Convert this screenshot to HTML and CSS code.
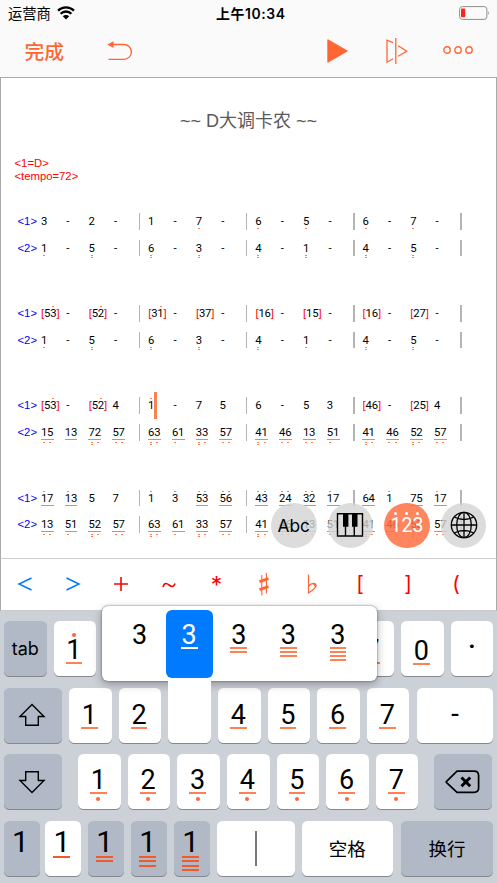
FILE: index.html
```html
<!DOCTYPE html>
<html lang="zh-CN">
<head>
  <meta charset="UTF-8">
  <meta name="viewport" content="width=device-width, initial-scale=1.0">
  <title>D大调卡农</title>
  <link rel="stylesheet" href="styles.css">
</head>
<body>
  <header>
    <div class="status">
      <div class="carrier">
        <span>运营商</span>
        <svg width="18" height="14" viewBox="0 0 18 14">
          <path d="M9 13.5 L5.8 10.2 A4.6 4.6 0 0 1 12.2 10.2 Z" fill="#000"/>
          <path d="M3.6 7.7 A7.7 7.7 0 0 1 14.4 7.7" fill="none" stroke="#000" stroke-width="2.3"/>
          <path d="M1 4.6 A11.5 11.5 0 0 1 17 4.6" fill="none" stroke="#000" stroke-width="2.3"/>
        </svg>
      </div>
      <span class="time">上午10:34</span>
      <svg class="battery" width="32" height="14" viewBox="0 0 32 14">
        <rect x="0.6" y="0.6" width="27.3" height="12.8" rx="2.8" fill="none" stroke="#8e8e8e"/>
        <rect x="2" y="2.6" width="4.2" height="8.6" rx="1" fill="#ff2419"/>
        <path d="M29.2 5 Q31 7 29.2 9 Z" fill="#8e8e8e"/>
      </svg>
    </div>
    <nav class="toolbar">
      <a class="done">完成</a>
      <svg class="undo" width="26" height="20" viewBox="0 0 26 20">
        <path d="M6 3.5 H17 A7.4 7.4 0 0 1 17 18.3 H1.5" fill="none" stroke="#ff6633" stroke-width="1.3"/>
        <path d="M0.3 3.5 L6.5 0.2 V6.9 Z" fill="#ff6633"/>
      </svg>
      <svg class="play" width="21" height="24" viewBox="0 0 21 24">
        <path d="M1 1 L20 12 L1 23 Z" fill="#ff6633" stroke="#ff6633" stroke-width="1.4" stroke-linejoin="round"/>
      </svg>
      <svg class="split" width="22" height="26" viewBox="0 0 22 26">
        <path d="M7 4.7 L1 2.2 V24.2 L7 20.7 M12.2 7.7 L20.7 13.2 L12.2 18.2 M9.8 0 V26" fill="none" stroke="#ff6633" stroke-width="1.3"/>
      </svg>
      <svg class="more" width="30" height="8" viewBox="0 0 30 8">
        <g fill="none" stroke="#ff6633" stroke-width="1.4">
          <circle cx="4" cy="4" r="3.2"/>
          <circle cx="15" cy="4" r="3.2"/>
          <circle cx="26" cy="4" r="3.2"/>
        </g>
      </svg>
    </nav>
  </header>

  <main class="editor">
    <h1>~~ D大调卡农 ~~</h1>
    <div class="meta">&lt;1=D&gt;<br>&lt;tempo=72&gt;</div>
    <div id="score"></div>

    <div class="modes">
      <button class="mode">Abc</button>
      <button class="mode">
        <svg width="28" height="26" viewBox="0 0 28 26">
          <path d="M1.5 1.8 H26.5 V24 H1.5 Z M9.5 2 V24 M18.3 2 V24" fill="none" stroke="#000" stroke-width="1.4"/>
          <path d="M7 2 H12.4 V14.8 H7 Z M16 2 H21.5 V14.8 H16 Z" fill="#000"/>
        </svg>
      </button>
      <button class="mode active">
        <span class="beads"><i></i><i></i><i></i></span>
        <span>123</span>
      </button>
      <button class="mode">
        <svg width="28" height="28" viewBox="0 0 28 28">
          <g fill="none" stroke="#000" stroke-width="1.3">
            <circle cx="14" cy="14" r="12.7"/>
            <ellipse cx="14" cy="14" rx="7.3" ry="12.7"/>
            <path d="M14 1.3 V26.7 M1.3 14 H26.7 M4.2 6 Q14 11 23.8 6 M4.2 22 Q14 17 23.8 22"/>
          </g>
        </svg>
      </button>
    </div>
  </main>

  <div class="symbols">
    <span><svg width="16" height="16" viewBox="0 0 16 16"><path d="M14.5 2 L2 8 L14.5 14" fill="none" stroke="#007aff" stroke-width="1.5"/></svg></span>
    <span><svg width="16" height="16" viewBox="0 0 16 16"><path d="M1.5 2 L14 8 L1.5 14" fill="none" stroke="#007aff" stroke-width="1.5"/></svg></span>
    <span><svg width="16" height="16" viewBox="0 0 16 16"><path d="M8 1 V15 M1 8 H15" fill="none" stroke="#f00" stroke-width="1.6"/></svg></span>
    <span><svg width="16" height="16" viewBox="0 0 16 16"><path d="M2 11 C3.5 6 6 7.5 8 9 S12.5 12 14 7.6" fill="none" stroke="#f00" stroke-width="1.6"/></svg></span>
    <span class="star">*</span>
    <span>
      <svg width="12" height="24" viewBox="0 0 12 24">
        <path d="M3.8 3 V23.5 M8.4 1 V21.5" stroke="#ff6633" stroke-width="1.1"/>
        <path d="M1.5 9.6 L10.5 6.6 M1.5 17.6 L10.5 14.6" stroke="#ff6633" stroke-width="2.8"/>
      </svg>
    </span>
    <span>
      <svg width="12" height="22" viewBox="0 0 12 22">
        <path d="M2.5 1.5 V20 C7 17 10 15 10 12.4 C10 9.3 5.3 10 2.6 13" fill="none" stroke="#ff6633" stroke-width="1.2"/>
        <path d="M7.3 10.8 Q10 11.5 9.2 14" fill="none" stroke="#ff6633" stroke-width="1.9"/>
      </svg>
    </span>
    <span>[</span>
    <span>]</span>
    <span>(</span>
  </div>

  <div class="keyboard">
    <div class="keys high" data-dots="high">
      <button class="key dark tab">tab</button>
      <button class="key" data-note="1"></button>
      <button class="key" data-note="2"></button>
      <button class="key" data-note="3"></button>
      <button class="key" data-note="4"></button>
      <button class="key" data-note="5"></button>
      <button class="key" data-note="6"></button>
      <button class="key" data-note="7"></button>
      <button class="key zero" data-note="0"></button>
      <button class="key dot">·</button>
    </div>

    <div class="keys">
      <button class="key dark shift">
        <svg width="28" height="24" viewBox="0 0 28 24"><path d="M14 1.5 L26 13.5 H20.3 V22.3 H7.7 V13.5 H2 Z" fill="none" stroke="#000" stroke-width="1.4"/></svg>
      </button>
      <button class="key" data-note="1"></button>
      <button class="key" data-note="2"></button>
      <button class="key pressed">
        <span class="popup" id="popup"></span>
      </button>
      <button class="key" data-note="4"></button>
      <button class="key" data-note="5"></button>
      <button class="key" data-note="6"></button>
      <button class="key" data-note="7"></button>
      <button class="key wide">-</button>
    </div>

    <div class="keys low" data-dots="low">
      <button class="key dark shift">
        <svg width="28" height="24" viewBox="0 0 28 24"><path d="M14 22.5 L26 10.5 H20.3 V1.7 H7.7 V10.5 H2 Z" fill="none" stroke="#000" stroke-width="1.4"/></svg>
      </button>
      <button class="key" data-note="1"></button>
      <button class="key" data-note="2"></button>
      <button class="key" data-note="3"></button>
      <button class="key" data-note="4"></button>
      <button class="key" data-note="5"></button>
      <button class="key" data-note="6"></button>
      <button class="key" data-note="7"></button>
      <button class="key dark delete">
        <svg width="36" height="24" viewBox="0 0 36 24">
          <path d="M12 1.2 H29 Q33.6 1.2 33.6 5.5 V18 Q33.6 22.3 29 22.3 H12 L1.6 12.6 Q1 12 1.6 11.4 Z" fill="none" stroke="#000" stroke-width="1.7" stroke-linejoin="round"/>
          <path d="M16.5 7.5 L25.2 16.2 M25.2 7.5 L16.5 16.2" stroke="#000" stroke-width="3"/>
        </svg>
      </button>
    </div>

    <div class="keys lengths">
      <button class="key dark" data-lines="0"></button>
      <button class="key" data-lines="1"></button>
      <button class="key dark" data-lines="2"></button>
      <button class="key dark" data-lines="3"></button>
      <button class="key dark" data-lines="4"></button>
      <button class="key bar-key"><i></i></button>
      <button class="key space">空格</button>
      <button class="key dark return">换行</button>
    </div>
  </div>

  <script src="script.js"></script>
</body>
</html>
```

FILE: styles.css
```css
* {
  margin: 0;
  padding: 0;
  box-sizing: border-box;
  border: none;
  outline: none;
}

body {
  width: 497px;
  height: 883px;
  overflow: hidden;
  display: flex;
  flex-direction: column;
  background-color: #fff;
  font-family: "Liberation Sans", "Noto Sans CJK SC", sans-serif;
}

svg {
  display: block;
  flex: none;
}

button {
  font-family: inherit;
  color: #000;
}

/* header */

header {
  height: 77px;
  background-color: #fafafa;
}

.status {
  display: flex;
  align-items: center;
  height: 25px;
  padding: 0 6px 0 8px;
  font-size: 14.3px;
}

.carrier {
  display: flex;
  align-items: center;
  gap: 7px;
  width: 208px;
}

.carrier svg {
  margin-left: -1px;
}

.time {
  flex: 1;
  font-family: Inter, "Noto Sans CJK SC", sans-serif;
  font-size: 13.9px;
  font-weight: 600;
  letter-spacing: .6px;
}

.toolbar {
  display: flex;
  align-items: center;
  height: 51px;
  padding-left: 24.5px;
}

.done {
  width: 82px;
  color: #ff6633;
  font-size: 19.8px;
  font-weight: 500;
  line-height: 28px;
  font-family: "Noto Sans CJK SC", sans-serif;
}

.play {
  margin-left: 194px;
}

.split {
  margin-left: 38px;
}

.more {
  margin-left: 35px;
  margin-bottom: 2px;
}

/* score */

.editor {
  position: relative;
  height: 481px;
  border: 1px solid #aaa;
  border-bottom: none;
}

h1 {
  margin-top: 30px;
  height: 26px;
  line-height: 26px;
  text-align: center;
  font-size: 18px;
  font-weight: normal;
  color: #5a5a5a;
}

.meta {
  margin: 22.5px 0 0 13.5px;
  height: 26px;
  font-size: 11.3px;
  line-height: 13px;
  color: #f00;
}

#score {
  display: flex;
  flex-direction: column;
  gap: 38.8px;
  padding: 26.5px 0 0 16.5px;
}

.system {
  height: 53.4px;
}

.staff {
  display: flex;
  height: 26.7px;
  font-size: 11.3px;
}

.label {
  width: 23.5px;
  line-height: 25px;
  color: #00f;
}

.measure {
  display: flex;
  width: 107.2px;
}

.measure::after {
  content: "";
  width: 1.3px;
  height: 16.5px;
  margin: 4px 0 0 2.5px;
  background-color: #b4b4b4;
}

.cell {
  display: flex;
  width: 23.85px;
  flex: none;
  line-height: 11px;
  font-family: Roboto, sans-serif;
}

.cell.caret {
  position: relative;
}

.cell.caret::after {
  content: "";
  position: absolute;
  left: 6px;
  top: -1px;
  width: 2.7px;
  height: 27px;
  background-color: #ff7f50;
}

.bracket {
  padding-top: 7px;
  color: #f00;
  font-family: "Liberation Sans", sans-serif;
}

.note {
  display: flex;
  flex-direction: column;
  align-items: center;
  width: 6.15px;
  padding-top: 5px;
}

.note i {
  width: 2px;
  height: 1px;
  margin-bottom: 1px;
  background-color: #ff7f50;
}

.note i.none {
  background: none;
}

.note b {
  font-weight: normal;
  height: 12px;
}

.note.line b {
  height: 13px;
  width: 6.8px;
  text-align: center;
  margin-bottom: 2px;
  border-bottom: 1.2px solid #ff7f50;
}

/* input mode buttons */

.modes {
  position: absolute;
  left: 270px;
  top: 424.5px;
  display: flex;
  gap: 11.1px;
}

.mode {
  display: flex;
  flex-direction: column;
  align-items: center;
  justify-content: center;
  width: 45.5px;
  height: 45.5px;
  border-radius: 50%;
  background-color: rgba(211, 211, 211, .8);
  font-family: Inter, sans-serif;
  font-size: 17.3px;
}

.mode.active {
  background-color: rgba(255, 112, 67, .85);
  color: #fff;
  font-family: Roboto, sans-serif;
  font-size: 19.5px;
  line-height: 19px;
  padding-bottom: 3px;
}

.beads {
  display: flex;
  gap: 8px;
  margin-bottom: 1px;
}

.beads i {
  width: 3px;
  height: 3px;
  border-radius: 50%;
  background-color: #fff;
}

/* symbol bar */

.symbols {
  display: flex;
  height: 53px;
  padding-bottom: 2px;
  border: 1px solid #aaa;
  border-top-color: #ccc;
  border-bottom-color: #ccc;
  flex: none;
}

.symbols span {
  display: flex;
  align-items: center;
  justify-content: center;
  width: 47.9px;
  flex: none;
  color: #f00;
  font-family: Inter, sans-serif;
  font-size: 21px;
}

.symbols .star {
  font-size: 23px;
  padding-top: 2px;
}

/* keyboard */

.keyboard {
  flex: 1;
  display: flex;
  flex-direction: column;
  gap: 11.7px;
  padding: 10px 4px 0;
  background-color: #ccd0d7;
}

.keys {
  display: flex;
  gap: 7.15px;
}

.key {
  display: flex;
  align-items: center;
  justify-content: center;
  width: 42.5px;
  height: 55px;
  flex: none;
  border-radius: 5.5px;
  background-color: #fff;
  box-shadow: 0 1px 0 #85888d;
  font-family: Roboto, sans-serif;
  font-size: 27px;
}

.key.dark {
  background-color: #b1b8c6;
}

.key.tab {
  font-family: Inter, sans-serif;
  font-size: 18px;
}

.key.dot {
  font-size: 34px;
  padding-bottom: 5px;
}

.shift {
  width: 58px;
  padding-right: 2px;
}

.wide {
  width: 76.5px;
  font-family: "Liberation Sans", sans-serif;
  padding-bottom: 3px;
}

.low .shift {
  margin-right: 9px;
}

.delete {
  width: 58.3px;
  margin-left: 8.5px;
}

.digit {
  display: flex;
  flex-direction: column;
  align-items: center;
  margin-right: 2px;
  padding-top: 3px;
  line-height: 22px;
}

.digit i {
  width: 16.7px;
  height: 2px;
  margin-top: 1px;
  background-color: #ff8052;
}

.digit i.bead {
  width: 4px;
  height: 4px;
  border-radius: 50%;
  margin-top: 3px;
  background-color: #ff6633;
}

.digit i.bead:first-child {
  margin: -3px 0 2px;
}

.low .digit {
  padding-top: 7px;
}

.zero .digit {
  padding-top: 7px;
}

.pressed {
  position: relative;
  z-index: 1;
}

.popup {
  position: absolute;
  left: -66.5px;
  top: -82px;
  display: flex;
  width: 275px;
  height: 75.5px;
  padding: 4px 14px;
  border-radius: 6px;
  background-color: #fff;
  box-shadow: 0 0 2px rgba(0, 0, 0, .6), 0 3px 10px rgba(0, 0, 0, .3);
}

/* joins the popup with the pressed key */
.popup::after {
  content: "";
  position: absolute;
  left: 66.5px;
  top: 74px;
  width: 42.5px;
  height: 20px;
  background-color: #fff;
}

.popup .digit {
  width: 47.3px;
  height: 68px;
  margin-right: 2.3px;
  padding-top: 14px;
  border-radius: 6px;
  flex: none;
}

.popup .digit i + i {
  margin-top: 2px;
}

.popup .selected {
  background-color: #007aff;
  color: #fff;
}

.popup .selected i {
  background-color: #fff;
}

.lengths .key {
  width: 35.8px;
  align-items: flex-start;
  font-size: 30px;
}

.lengths .key:nth-child(2) {
  margin-left: -1.5px;
}

.lengths .digit {
  padding-top: 10px;
  margin-right: 3px;
}

.lengths .digit i {
  margin-top: 2.4px;
  background-color: #f15a29;
}

.lengths .digit i:first-of-type {
  margin-top: 3px;
}

.lengths .bar-key {
  width: 77.5px;
  align-items: center;
}

.bar-key i {
  width: 1.2px;
  height: 35px;
  background-color: #777;
}

.lengths .space,
.lengths .return {
  width: 91px;
  align-items: center;
  padding-bottom: 2px;
  font-family: "Noto Sans CJK SC", sans-serif;
  font-size: 18.5px;
}

.lengths .return {
  width: 92px;
  margin-left: 1px;
}
```

FILE: script.js
```js
// ' dot above, , dot below, _ underlined group, ! caret
const systems = [
  [
    "3 - 2 - | 1 - 7, - | 6, - 5, - | 6, - 7, -",
    "1, - 5,, - | 6,, - 3,, - | 4,, - 1,, - | 4,, - 5,, -"
  ],
  [
    "[53'] - [52'] - | [31'] - [37] - | [16] - [15] - | [16] - [27] -",
    "1, - 5,, - | 6,, - 3,, - | 4,, - 1, - | 4,, - 5,, -"
  ],
  [
    "[53'] - [52'] 4 | !1' - 7 5 | 6 - 5 3 | [46] - [25] 4",
    "_1,5, _13 _7,,2, _5,7, | _6,,3, _6,1 _3,,3, _5,7, | _4,,1, _4,6, _1,3, _5,1 | _4,,1, _4,6, _5,,2, _5,7,"
  ],
  [
    "_1'7 _1'3 5 7 | 1' 3' _5'3' _5'6' | _4'3' _2'4' _3'2' _1'7 | _64 1' _75 _1'7",
    "_1,3, _5,1 _5,,2, _5,7, | _6,,3, _6,1 _3,,3, _5,7, | _4,,1, _4,6, _1,3, _5,1 | _4,,1, _4,6, _5,,2, _5,7,"
  ]
]

function renderCell(text) {
  const line = text.includes('_') ? ' line' : ''
  const caret = text.includes('!') ? ' caret' : ''
  const parts = text.match(/[\[\]]|[\d-]['|,]*/g)

  const html = parts.map(part => {
    if (part === '[' || part === ']') return `<span class="bracket">${part}</span>`

    const high = part.includes("'") ? 'high' : 'high none'
    const low = '<i></i>'.repeat(part.split(',').length - 1)

    return `<span class="note${line}"><i class="${high}"></i><b>${part[0]}</b>${low}</span>`
  }).join('')

  return `<div class="cell${caret}">${html}</div>`
}

function renderStaff(text, index) {
  const measures = text.split(' | ').map(measure =>
    `<div class="measure">${measure.split(' ').map(renderCell).join('')}</div>`
  ).join('')

  return `<div class="staff"><span class="label">&lt;${index + 1}&gt;</span>${measures}</div>`
}

function renderDigit(digit, lines, dots, className = '') {
  const bead = '<i class="bead"></i>'

  return `<span class="digit ${className}">${dots === 'high' ? bead : ''}${digit}${'<i></i>'.repeat(lines)}${dots === 'low' ? bead : ''}</span>`
}

document.getElementById('score').innerHTML = systems.map(staffs =>
  `<div class="system">${staffs.map(renderStaff).join('')}</div>`
).join('')

document.querySelectorAll('[data-note]').forEach(key => {
  const { note } = key.dataset
  const dots = note === '0' ? '' : key.parentElement.dataset.dots

  key.innerHTML = renderDigit(note, 1, dots)
})

document.querySelectorAll('[data-lines]').forEach(key => {
  key.innerHTML = renderDigit(1, Number(key.dataset.lines))
})

document.getElementById('popup').innerHTML = [0, 1, 2, 3, 4].map(lines =>
  renderDigit(3, lines, '', lines === 1 ? 'selected' : '')
).join('')
```
